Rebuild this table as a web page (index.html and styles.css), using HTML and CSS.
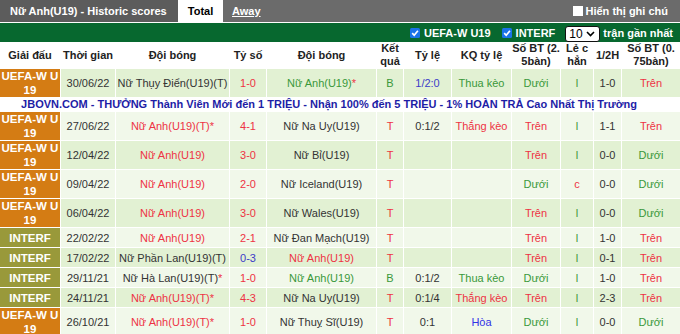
FILE: index.html
```html
<!DOCTYPE html>
<html lang="vi">
<head>
<meta charset="utf-8">
<title>Historic scores</title>
<link rel="stylesheet" href="styles.css">
</head>
<body>
<div class="topbar">
  <div class="title">Nữ Anh(U19) - Historic scores</div>
  <div class="tab tab-active">Total</div>
  <div class="tab tab-away">Away</div>
  <label class="note"><span class="box"></span>Hiển thị ghi chú</label>
</div>
<div class="filter">
  <span class="chk"><svg width="10" height="10" viewBox="0 0 10 10"><rect x="0" y="0" width="10" height="10" rx="1.5" fill="#1a73e8"/><path d="M2.2 5.2 L4.2 7.3 L7.9 2.8" stroke="#fff" stroke-width="1.7" fill="none"/></svg>UEFA-W U19</span>
  <span class="chk"><svg width="10" height="10" viewBox="0 0 10 10"><rect x="0" y="0" width="10" height="10" rx="1.5" fill="#1a73e8"/><path d="M2.2 5.2 L4.2 7.3 L7.9 2.8" stroke="#fff" stroke-width="1.7" fill="none"/></svg>INTERF</span>
  <span class="select">10<svg width="9" height="6" viewBox="0 0 9 6"><path d="M1 1 L4.5 4.5 L8 1" stroke="#000" stroke-width="1.6" fill="none"/></svg></span>
  <span class="recent">trận gần nhất</span>
</div>
<table class="hist">
  <colgroup>
    <col style="width:60px"><col style="width:55px"><col style="width:114px"><col style="width:37px">
    <col style="width:110px"><col style="width:27px"><col style="width:48px"><col style="width:60px">
    <col style="width:49px"><col style="width:33px"><col style="width:28px"><col style="width:59px">
  </colgroup>
  <thead>
    <tr>
      <th>Giải đấu</th><th>Thời gian</th><th>Đội bóng</th><th>Tỷ số</th><th>Đội bóng</th>
      <th>Kết<br>quả</th><th>Tỷ lệ</th><th>KQ tỷ lệ</th><th>Số BT (2.<br>5bàn)</th>
      <th>Lẻ c<br>hẳn</th><th>1/2H</th><th>Số BT (0.<br>75bàn)</th>
    </tr>
  </thead>
  <tbody>
    <tr class="rg">
      <td class="lg uefa">UEFA-W U<br>19</td><td>30/06/22</td><td>Nữ Thụy Điển(U19)(T)</td><td class="red">1-0</td>
      <td class="green">Nữ Anh(U19)<span class="red">*</span></td><td class="green">B</td><td class="blue">1/2:0</td><td class="green">Thua kèo</td>
      <td class="green">Dưới</td><td class="green">l</td><td>1-0</td><td class="red">Trên</td>
    </tr>
    <tr class="ad">
      <td colspan="12">JBOVN.COM - THƯỞNG Thành Viên Mới đến 1 TRIỆU - Nhận 100% đến 5 TRIỆU - 1% HOÀN TRẢ Cao Nhất Thị Trường</td>
    </tr>
    <tr class="rl">
      <td class="lg uefa">UEFA-W U<br>19</td><td>27/06/22</td><td class="red">Nữ Anh(U19)(T)*</td><td class="red">4-1</td>
      <td>Nữ Na Uy(U19)</td><td class="red">T</td><td>0:1/2</td><td class="red">Thắng kèo</td>
      <td class="red">Trên</td><td class="green">l</td><td>1-1</td><td class="red">Trên</td>
    </tr>
    <tr class="rg">
      <td class="lg uefa">UEFA-W U<br>19</td><td>12/04/22</td><td class="red">Nữ Anh(U19)</td><td class="red">3-0</td>
      <td>Nữ Bỉ(U19)</td><td class="red">T</td><td></td><td></td>
      <td class="red">Trên</td><td class="green">l</td><td>0-0</td><td class="green">Dưới</td>
    </tr>
    <tr class="rl">
      <td class="lg uefa">UEFA-W U<br>19</td><td>09/04/22</td><td class="red">Nữ Anh(U19)</td><td class="red">2-0</td>
      <td>Nữ Iceland(U19)</td><td class="red">T</td><td></td><td></td>
      <td class="green">Dưới</td><td class="red">c</td><td>0-0</td><td class="green">Dưới</td>
    </tr>
    <tr class="rg">
      <td class="lg uefa">UEFA-W U<br>19</td><td>06/04/22</td><td class="red">Nữ Anh(U19)</td><td class="red">3-0</td>
      <td>Nữ Wales(U19)</td><td class="red">T</td><td></td><td></td>
      <td class="red">Trên</td><td class="green">l</td><td>0-0</td><td class="green">Dưới</td>
    </tr>
    <tr class="rl">
      <td class="lg interf">INTERF</td><td>22/02/22</td><td class="red">Nữ Anh(U19)</td><td class="red">2-1</td>
      <td>Nữ Đan Mạch(U19)</td><td class="red">T</td><td></td><td></td>
      <td class="red">Trên</td><td class="green">l</td><td>1-0</td><td class="red">Trên</td>
    </tr>
    <tr class="rg">
      <td class="lg interf">INTERF</td><td>17/02/22</td><td>Nữ Phần Lan(U19)(T)</td><td class="blue">0-3</td>
      <td class="red">Nữ Anh(U19)</td><td class="red">T</td><td></td><td></td>
      <td class="red">Trên</td><td class="green">l</td><td>0-1</td><td class="red">Trên</td>
    </tr>
    <tr class="rl">
      <td class="lg interf">INTERF</td><td>29/11/21</td><td>Nữ Hà Lan(U19)(T)<span class="red">*</span></td><td class="red">1-0</td>
      <td class="green">Nữ Anh(U19)</td><td class="green">B</td><td>0:1/2</td><td class="green">Thua kèo</td>
      <td class="green">Dưới</td><td class="green">l</td><td>1-0</td><td class="red">Trên</td>
    </tr>
    <tr class="rg">
      <td class="lg interf">INTERF</td><td>24/11/21</td><td class="red">Nữ Anh(U19)(T)*</td><td class="red">4-3</td>
      <td>Nữ Na Uy(U19)</td><td class="red">T</td><td>0:1/4</td><td class="red">Thắng kèo</td>
      <td class="red">Trên</td><td class="green">l</td><td>2-3</td><td class="red">Trên</td>
    </tr>
    <tr class="rl">
      <td class="lg uefa">UEFA-W U<br>19</td><td>26/10/21</td><td class="red">Nữ Anh(U19)(T)*</td><td class="red">1-0</td>
      <td>Nữ Thuỵ Sĩ(U19)</td><td class="red">T</td><td>0:1</td><td class="blue2">Hòa</td>
      <td class="green">Dưới</td><td class="green">l</td><td>0-0</td><td class="green">Dưới</td>
    </tr>
  </tbody>
</table>
</body>
</html>
```

FILE: styles.css
```css
* { box-sizing: border-box; }
body {
  margin: 0;
  width: 680px;
  font-family: "Liberation Sans", Arial, sans-serif;
  font-size: 11px;
  color: #333;
  background: #fff;
}
.topbar {
  display: flex;
  height: 22px;
  background: #6b6b6b;
  color: #fff;
  font-weight: bold;
  font-size: 11px;
  line-height: 22px;
}
.title {
  background: #5c5c5c;
  padding: 0 9px 0 10px;
  width: 178px;
}
.tab-active {
  background: #fff;
  color: #000;
  width: 45px;
  text-align: center;
}
.tab-away {
  padding-left: 9px;
  text-decoration: underline;
}
.note {
  margin-left: auto;
  display: flex;
  align-items: center;
  padding-right: 12px;
}
.note .box {
  width: 10px;
  height: 10px;
  background: #fff;
  margin-right: 3px;
}
.filter {
  margin-top: 1px;
  height: 19px;
  background: #07682f;
  color: #fff;
  font-weight: bold;
  display: flex;
  justify-content: flex-end;
  align-items: center;
  padding-right: 7px;
}
.chk {
  display: flex;
  align-items: center;
  gap: 4px;
  margin-right: 11px;
}
.chk + .chk { margin-right: 10px; }
.select {
  display: flex;
  align-items: center;
  justify-content: space-between;
  width: 35px;
  height: 16px;
  margin-top: 3px;
  padding: 0 4px 0 3px;
  background: #fff;
  color: #000;
  font-weight: normal;
  font-size: 12px;
  border: 1px solid #111;
  border-radius: 3px;
  margin-right: 3px;
}
.hist {
  width: 680px;
  border-collapse: separate;
  border-spacing: 0;
  table-layout: fixed;
}
.hist th, .hist td {
  border-left: 1px solid #fff;
  border-top: 1px solid #fff;
  padding: 0;
  text-align: center;
  vertical-align: middle;
  line-height: 14px;
  white-space: nowrap;
  overflow: hidden;
}
.hist tr > :first-child { border-left: 0; }
.hist th {
  height: 26px;
  line-height: 13px;
  font-weight: bold;
  color: #222;
  border-top: 0;
  background: #fff;
}
.hist td { height: 20px; }
.rg td { background: #e2f1d3; }
.rl td { background: #f1f8ea; }
.hist td.lg {
  color: #fff;
  font-weight: bold;
  font-size: 11.5px;
}
.hist td.uefa { background: #d47c14; }
.hist td.interf { background: #99993a; }
.hist .ad td {
  height: 14px;
  line-height: 13px;
  padding-right: 22px;
  background: #fff;
  color: #1d1da6;
  font-weight: bold;
}
.red { color: #ee3344; }
.green { color: #3a983a; }
.blue { color: #3c3cc8; }
.blue2 { color: #3333e6; }
```
